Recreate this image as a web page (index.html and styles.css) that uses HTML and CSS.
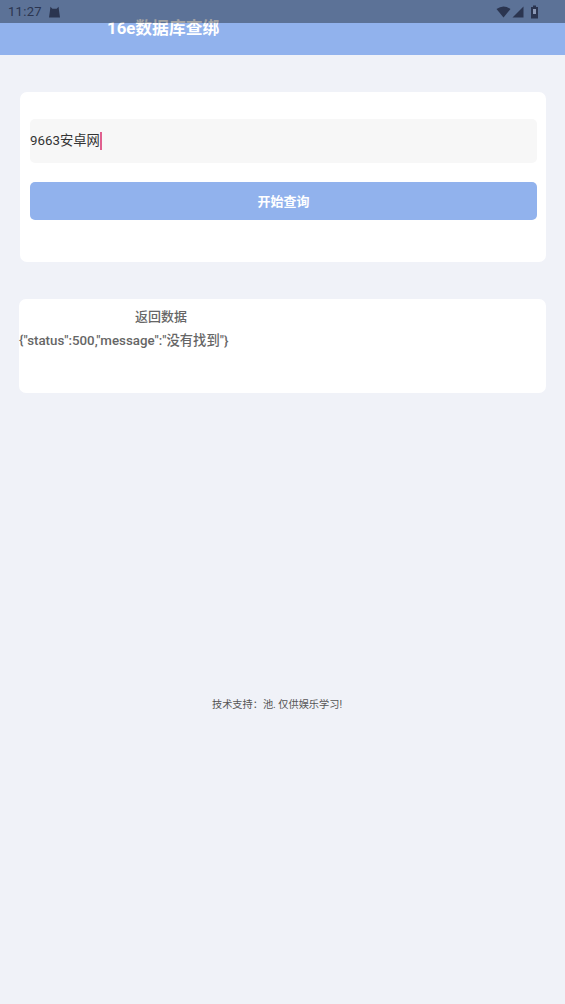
FILE: index.html
```html
<!DOCTYPE html>
<html>

<head>
  <meta charset="UTF-8">
  <title>16e数据库查绑</title>
  <link rel="stylesheet" href="styles.css">
</head>

<body>
  <!-- Barra de status sobre o cabeçalho -->
  <div class="status-bar">
    <div class="status-left">
      <span class="clock">11:27</span>
      <svg class="cat-icon" width="13" height="12" viewBox="0 0 13 12">
        <path d="M1 11.5 L2 4.5 L2.4 0.8 L4.4 2.8 L8.6 2.8 L10.6 0.8 L11 4.5 L12 11.5 Z" fill="#2b3550" />
      </svg>
    </div>
    <div class="status-right">
      <svg class="wifi-icon" width="15" height="12" viewBox="0 0 15 12">
        <path d="M0.5 3 Q7.5 -2 14.5 3 L7.5 11.5 Z" fill="#2b3550" />
      </svg>
      <svg class="signal-icon" width="12" height="12" viewBox="0 0 12 12">
        <path d="M0.5 11.5 L11.5 0.5 L11.5 11.5 Z" fill="#2b3550" />
      </svg>
      <svg class="battery-icon" width="9" height="14" viewBox="0 0 9 14">
        <path d="M3 0.5 H6 V2 H8 V13.5 H1 V2 H3 Z" fill="#2b3550" />
        <rect x="3" y="4" width="3" height="5" fill="#8b98b5" />
      </svg>
    </div>
  </div>

  <div class="header">
    <h1>16e数据库查绑</h1>
  </div>

  <div class="container">
    <div class="card query-card">
      <div class="query-input">9663安卓网<span class="caret"></span></div>
      <button class="query-button">开始查询</button>
    </div>

    <div class="card result-card">
      <div class="result-title">返回数据</div>
      <div class="result-body">{"status":500,"message":"没有找到"}</div>
    </div>

    <div class="footer">技术支持：池. 仅供娱乐学习!</div>
  </div>
</body>

</html>
```

FILE: styles.css
```css
body {
  font-family: Roboto, "Noto Sans CJK SC", sans-serif;
  margin: 0;
  padding: 0;
  height: 1004px;
  overflow: hidden;
  background-color: #f0f2f8;
  color: #666;
  position: relative;
}

.status-bar {
  position: absolute;
  top: 0;
  left: 0;
  right: 0;
  height: 23px;
  padding: 0 26px 0 8px;
  display: flex;
  justify-content: space-between;
  align-items: center;
  background-color: rgba(0, 0, 0, 0.36);
  color: #2b3550;
  font-size: 13px;
}

.status-left {
  display: flex;
  align-items: center;
  gap: 6px;
}

.clock {
  letter-spacing: 0.3px;
}

.status-right {
  display: flex;
  align-items: center;
  gap: 1px;
}

.battery-icon {
  margin-left: 5px;
}

.header {
  height: 55px;
  background-color: #91b2ed;
}

.header h1 {
  margin: 0;
  padding: 18px 0 0 107px;
  font-size: 16.8px;
  line-height: 20px;
  font-weight: 700;
  color: white;
}

.card {
  background-color: white;
  border-radius: 7px;
}

.query-card {
  margin: 37px 19px 0 20px;
  height: 170px;
  padding: 27px 9px 0 10px;
  box-sizing: border-box;
}

.query-input {
  height: 44px;
  line-height: 44px;
  background-color: #f7f7f7;
  border-radius: 5px;
  font-size: 13.3px;
  color: #333;
}

.caret {
  display: inline-block;
  width: 2px;
  height: 18px;
  vertical-align: middle;
  background-color: #e0608f;
}

.query-button {
  display: block;
  width: 100%;
  height: 38px;
  margin-top: 19px;
  padding: 0 0 2px;
  background-color: #91b2ed;
  color: white;
  border: none;
  border-radius: 5px;
  font-family: inherit;
  font-size: 13px;
  font-weight: 700;
}

.result-card {
  margin: 37px 19px 0 19px;
  height: 94px;
}

.result-title {
  padding-top: 9px;
  width: 284px;
  text-align: center;
  font-size: 13px;
  line-height: 18px;
  font-weight: 500;
}

.result-body {
  margin-top: 6px;
  font-size: 13.3px;
  line-height: 18px;
  font-weight: 500;
}

.footer {
  margin-top: 305px;
  padding-right: 11px;
  text-align: center;
  font-size: 10.2px;
  line-height: 14px;
  color: #555;
}
```
